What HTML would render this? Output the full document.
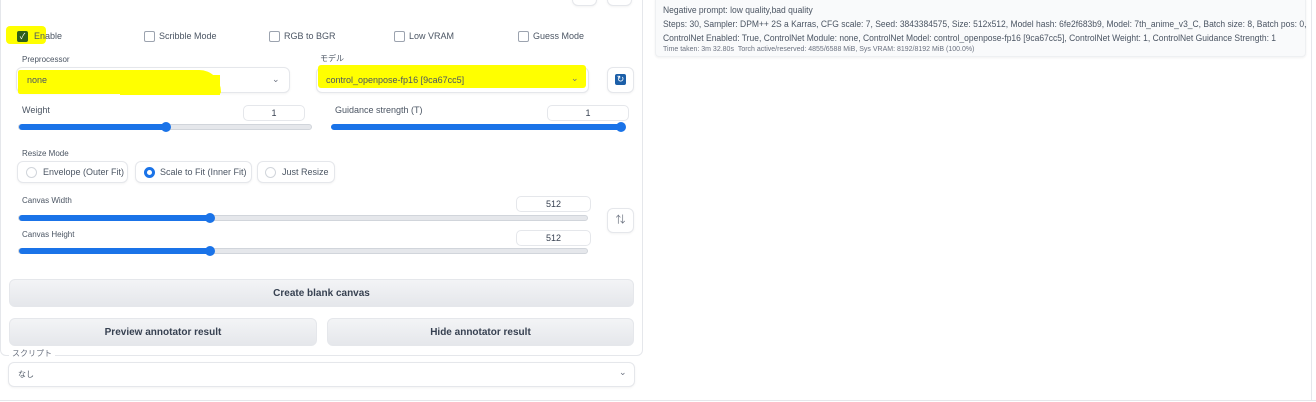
<!DOCTYPE html>
<html><head><meta charset="utf-8"><style>
*{box-sizing:border-box;margin:0;padding:0}
body{width:1316px;height:402px;background:#fff;font-family:"Liberation Sans","Noto Sans CJK JP",sans-serif;color:#374151;position:relative;overflow:hidden;font-size:9px}
.a{position:absolute}
.panel{left:0;top:-10px;width:643px;height:366px;border:1px solid #e5e7eb;border-radius:0 0 6px 6px}
.cb{width:11px;height:11px;border:1px solid #9ca3af;border-radius:2px;background:#fff}
.lbl{font-size:9px;color:#4b5563}
.box{border:1px solid #e5e7eb;border-radius:6px;background:#fff;box-shadow:0 1px 2px rgba(0,0,0,.05)}
.num{border:1px solid #e5e7eb;border-radius:5px;text-align:center;font-size:9px;line-height:14px;height:16px;background:#fff}
.track{height:6px;border-radius:3px;background:#e5e7eb;border:1px solid #d1d5db}
.fill{height:6px;border-radius:3px;background:#1a73e8;top:0;left:0}
.knob{width:10px;height:10px;border-radius:50%;background:#1a73e8;top:-3px}
.btn{border:1px solid #e5e7eb;border-radius:6px;background:linear-gradient(#f3f4f6,#e5e7eb);text-align:center;font-size:10px;color:#374151;font-weight:bold}
.hl{background:#ffff00}
.radio{width:11px;height:11px;border-radius:50%;border:1px solid #d1d5db;background:#fff}
.chev{font-size:9px;color:#6b7280}
</style></head><body>
<div class="a panel"></div>
<div class="a box" style="left:572px;top:-8px;width:25px;height:14px"></div>
<div class="a box" style="left:607px;top:-8px;width:25px;height:14px"></div>

<div class="a hl" style="left:6px;top:26px;width:40px;height:18px;border-radius:4px"></div>
<div class="a cb" style="left:17px;top:31px;background:#2f5f1a;border-color:#2f5f1a;color:#fff;font-size:8px;line-height:9px;text-align:center">✓</div>
<div class="a lbl" style="left:34px;top:31px">Enable</div>
<div class="a cb" style="left:144px;top:31px"></div><div class="a lbl" style="left:159px;top:31px">Scribble Mode</div>
<div class="a cb" style="left:269px;top:31px"></div><div class="a lbl" style="left:284px;top:31px">RGB to BGR</div>
<div class="a cb" style="left:394px;top:31px"></div><div class="a lbl" style="left:409px;top:31px">Low VRAM</div>
<div class="a cb" style="left:518px;top:31px"></div><div class="a lbl" style="left:533px;top:31px">Guess Mode</div>

<div class="a lbl" style="left:22px;top:55px;font-size:8px">Preprocessor</div>
<div class="a box" style="left:16px;top:67px;width:274px;height:26px"></div>
<div class="a hl" style="left:18px;top:70px;width:203px;height:24px;border-radius:3px 30px 3px 3px"></div>
<div class="a hl" style="left:120px;top:75px;width:100px;height:20px"></div>
<div class="a lbl" style="left:27px;top:75px">none</div>
<div class="a chev" style="left:272px;top:74px">⌄</div>

<div class="a lbl" style="left:320px;top:53px;font-size:8px">モデル</div>
<div class="a box" style="left:316px;top:67px;width:273px;height:26px"></div>
<div class="a hl" style="left:318px;top:65px;width:268px;height:23px;border-radius:3px"></div>
<div class="a lbl" style="left:326px;top:75px">control_openpose-fp16 [9ca67cc5]</div>
<div class="a chev" style="left:571px;top:73px">⌄</div>
<div class="a box" style="left:607px;top:67px;width:27px;height:26px"></div>
<div class="a" style="left:615px;top:74px;width:11px;height:11px;background:#1c5fa8;border-radius:2px;color:#fff;font-size:9px;line-height:11px;text-align:center">↻</div>

<div class="a lbl" style="left:22px;top:105px">Weight</div>
<div class="a num" style="left:243px;top:105px;width:62px">1</div>
<div class="a track" style="left:18px;top:124px;width:294px"><div class="a fill" style="width:148px;top:-1px"></div><div class="a knob" style="left:142px;top:-3px"></div></div>
<div class="a lbl" style="left:335px;top:105px">Guidance strength (T)</div>
<div class="a num" style="left:547px;top:105px;width:82px">1</div>
<div class="a track" style="left:331px;top:124px;width:294px;background:#1a73e8;border-color:#1a73e8"><div class="a knob" style="left:284px;top:-3px"></div></div>

<div class="a lbl" style="left:22px;top:149px;font-size:8px">Resize Mode</div>
<div class="a box" style="left:17px;top:161px;width:111px;height:22px"></div>
<div class="a radio" style="left:26px;top:167px"></div><div class="a lbl" style="left:43px;top:167px">Envelope (Outer Fit)</div>
<div class="a box" style="left:135px;top:161px;width:117px;height:22px"></div>
<div class="a radio" style="left:144px;top:167px;border:3px solid #1a73e8"></div><div class="a lbl" style="left:160px;top:167px">Scale to Fit (Inner Fit)</div>
<div class="a box" style="left:257px;top:161px;width:78px;height:22px"></div>
<div class="a radio" style="left:265px;top:167px"></div><div class="a lbl" style="left:282px;top:167px">Just Resize</div>

<div class="a lbl" style="left:22px;top:196px;font-size:8px">Canvas Width</div>
<div class="a num" style="left:516px;top:196px;width:75px">512</div>
<div class="a track" style="left:18px;top:215px;width:570px"><div class="a fill" style="width:192px;top:-1px"></div><div class="a knob" style="left:186px;top:-3px"></div></div>
<div class="a lbl" style="left:22px;top:230px;font-size:8px">Canvas Height</div>
<div class="a num" style="left:516px;top:230px;width:75px">512</div>
<div class="a track" style="left:18px;top:248px;width:570px"><div class="a fill" style="width:192px;top:-1px"></div><div class="a knob" style="left:186px;top:-3px"></div></div>
<div class="a box" style="left:607px;top:208px;width:27px;height:25px;text-align:center;font-size:10px;line-height:24px;color:#6b7280">⇅</div>

<div class="a btn" style="left:9px;top:279px;width:625px;height:28px;line-height:27px">Create blank canvas</div>
<div class="a btn" style="left:9px;top:318px;width:308px;height:28px;line-height:27px">Preview annotator result</div>
<div class="a btn" style="left:327px;top:318px;width:307px;height:28px;line-height:27px">Hide annotator result</div>

<div class="a" style="left:9px;top:348px;padding:0 3px;background:#fff;font-size:8px;color:#6b7280">スクリプト</div>
<div class="a box" style="left:8px;top:362px;width:627px;height:25px"></div>
<div class="a lbl" style="left:18px;top:369px;font-size:8px">なし</div>
<div class="a chev" style="left:619px;top:367px">⌄</div>
<div class="a" style="left:0;top:400px;width:1316px;height:1px;background:#e5e7eb"></div>

<div class="a" style="left:655px;top:-5px;width:651px;height:62px;background:#f9fafb;border:1px solid #eef0f2;border-radius:4px;box-shadow:0 1px 2px rgba(0,0,0,.06)"></div>
<div class="a" style="left:663px;top:4px;font-size:9px;color:#4b5563;line-height:13.8px;white-space:nowrap;transform:scaleX(0.945);transform-origin:0 0">Negative prompt: low quality,bad quality<br>Steps: 30, Sampler: DPM++ 2S a Karras, CFG scale: 7, Seed: 3843384575, Size: 512x512, Model hash: 6fe2f683b9, Model: 7th_anime_v3_C, Batch size: 8, Batch pos: 0,<br>ControlNet Enabled: True, ControlNet Module: none, ControlNet Model: control_openpose-fp16 [9ca67cc5], ControlNet Weight: 1, ControlNet Guidance Strength: 1</div>
<div class="a" style="left:663px;top:46px;font-size:7px;color:#6b7280;white-space:nowrap">Time taken: 3m 32.80s &nbsp;Torch active/reserved: 4855/6588 MiB, Sys VRAM: 8192/8192 MiB (100.0%)</div>
<div class="a" style="left:1311px;top:0;width:1px;height:400px;background:#e5e7eb"></div>
</body></html>
